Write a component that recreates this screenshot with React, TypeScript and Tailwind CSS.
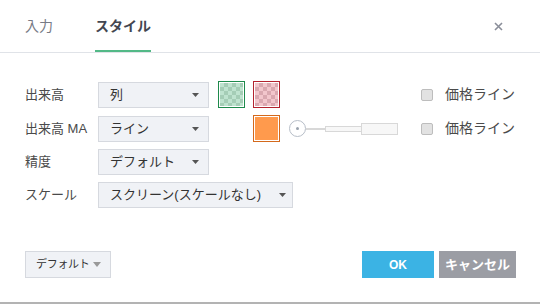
import React from "react";

const font = { fontFamily: '"Liberation Sans", "Noto Sans CJK JP", sans-serif' };

function Caret({ color = "#555", w = 7, h = 4 }: { color?: string; w?: number; h?: number }) {
  return (
    <svg width={w} height={h} viewBox={`0 0 ${w} ${h}`} className="shrink-0">
      <path d={`M0 0 L${w} 0 L${w / 2} ${h} Z`} fill={color} />
    </svg>
  );
}

function Select({ label, w, pr = "pr-[9px]" }: { label: string; w: string; pr?: string }) {
  return (
    <div className={`${w} ${pr} h-[26px] flex items-center justify-between pl-[11px] bg-[#f0f2f6] border border-[#d6d9df] text-[13px] text-[#333]`}>
      <span className="whitespace-nowrap">{label}</span>
      <Caret />
    </div>
  );
}

function Swatch({ border, a, b, solid }: { border: string; a?: string; b?: string; solid?: string }) {
  const bg = solid
    ? { background: solid }
    : {
        backgroundColor: a,
        backgroundImage: `linear-gradient(45deg, ${b} 25%, transparent 25%, transparent 75%, ${b} 75%), linear-gradient(45deg, ${b} 25%, transparent 25%, transparent 75%, ${b} 75%)`,
        backgroundSize: "8px 8px",
        backgroundPosition: "0 0, 4px 4px",
      };
  return (
    <div className="w-[27px] h-[27px] p-[1px] bg-white border" style={{ borderColor: border }}>
      <div className="w-full h-full" style={bg} />
    </div>
  );
}

function Check() {
  return (
    <div className="flex items-center gap-[12px]">
      <div className="w-[12px] h-[12px] rounded-[2px] bg-[#e2e2e2] border border-[#bdbdbd]" />
      <span className="text-[14px] text-[#4a4a4a] whitespace-nowrap">価格ライン</span>
    </div>
  );
}

function Slider() {
  return (
    <div className="w-[110px] h-[20px] flex items-center">
      <div className="w-[17px] h-[17px] rounded-full border border-[#b7bec8] bg-white flex items-center justify-center shrink-0">
        <div className="w-[3px] h-[3px] rounded-full bg-[#9aa2ad]" />
      </div>
      <div className="w-[19px] h-[2px] border-y border-[#d8d8d8] bg-[#f5f5f5]" />
      <div className="w-[37px] h-[6px] border border-[#d8d8d8] bg-[#f7f7f7]" />
      <div className="w-[37px] h-[12px] border border-[#d8d8d8] bg-[#f7f7f7] -ml-[1px]" />
    </div>
  );
}

export default function App() {
  return (
    <div className="w-[540px] h-[304px] bg-white flex flex-col border-b-2 border-[#b3b3b3]" style={font}>
      <div className="h-[53px] border-b border-[#e0e3e8] flex items-end pl-[25px] pr-[37px]">
        <div className="h-[52px] flex items-center text-[14px] text-[#787b86] w-[70px]">入力</div>
        <div className="h-[52px] flex flex-col justify-center relative text-[14px] font-bold text-[#434651]">
          スタイル
          <div className="absolute left-0 right-0 bottom-0 h-[2px] bg-[#53b987]" />
        </div>
        <div className="ml-auto h-[52px] flex items-center">
          <svg width="9" height="9" viewBox="0 0 9 9">
            <path d="M1 1 L8 8 M8 1 L1 8" stroke="#8a8e99" strokeWidth="1.6" />
          </svg>
        </div>
      </div>

      <div className="flex flex-col gap-[7px] pl-[25px] pt-[28px] text-[13px] text-[#4a4a4a]">
        <div className="flex items-center h-[27px]">
          <div className="w-[73px]">出来高</div>
          <Select label="列" w="w-[111px]" />
          <div className="ml-[9px]"><Swatch border="#1e8a4c" a="#bfe3cf" b="#a5cdb6" /></div>
          <div className="ml-[8px]"><Swatch border="#b3232f" a="#f2c6cc" b="#d9a8b0" /></div>
          <div className="ml-[141px]"><Check /></div>
        </div>
        <div className="flex items-center h-[27px]">
          <div className="w-[73px] whitespace-nowrap">出来高 MA</div>
          <Select label="ライン" w="w-[111px]" />
          <div className="ml-[44px]"><Swatch border="#d4691c" solid="#ff9a4d" /></div>
          <div className="ml-[9px]"><Slider /></div>
          <div className="ml-[22px]"><Check /></div>
        </div>
        <div className="flex items-center h-[26px]">
          <div className="w-[73px]">精度</div>
          <Select label="デフォルト" w="w-[111px]" />
        </div>
        <div className="flex items-center h-[26px]">
          <div className="w-[73px]">スケール</div>
          <Select label="スクリーン(スケールなし)" w="w-[195px]" pr="pr-[6px]" />
        </div>
      </div>

      <div className="mt-auto mb-[24px] flex items-center pl-[25px] pr-[24px]">
        <div className="w-[86px] h-[27px] flex items-center pl-[10px] pr-[9px] bg-[#f0f2f6] border border-[#d6d9df] text-[11px] text-[#333]">
          <span className="whitespace-nowrap tracking-[-0.3px]">デフォルト</span>
          <div className="ml-auto"><Caret color="#999" w={8} h={5} /></div>
        </div>
        <div className="ml-auto w-[72px] h-[27px] bg-[#3bb3e4] text-white font-bold text-[12px] flex items-center justify-center">OK</div>
        <div className="ml-[5px] w-[77px] h-[27px] bg-[#9b9da4] text-white font-bold text-[13px] flex items-center justify-center">キャンセル</div>
      </div>
    </div>
  );
}
